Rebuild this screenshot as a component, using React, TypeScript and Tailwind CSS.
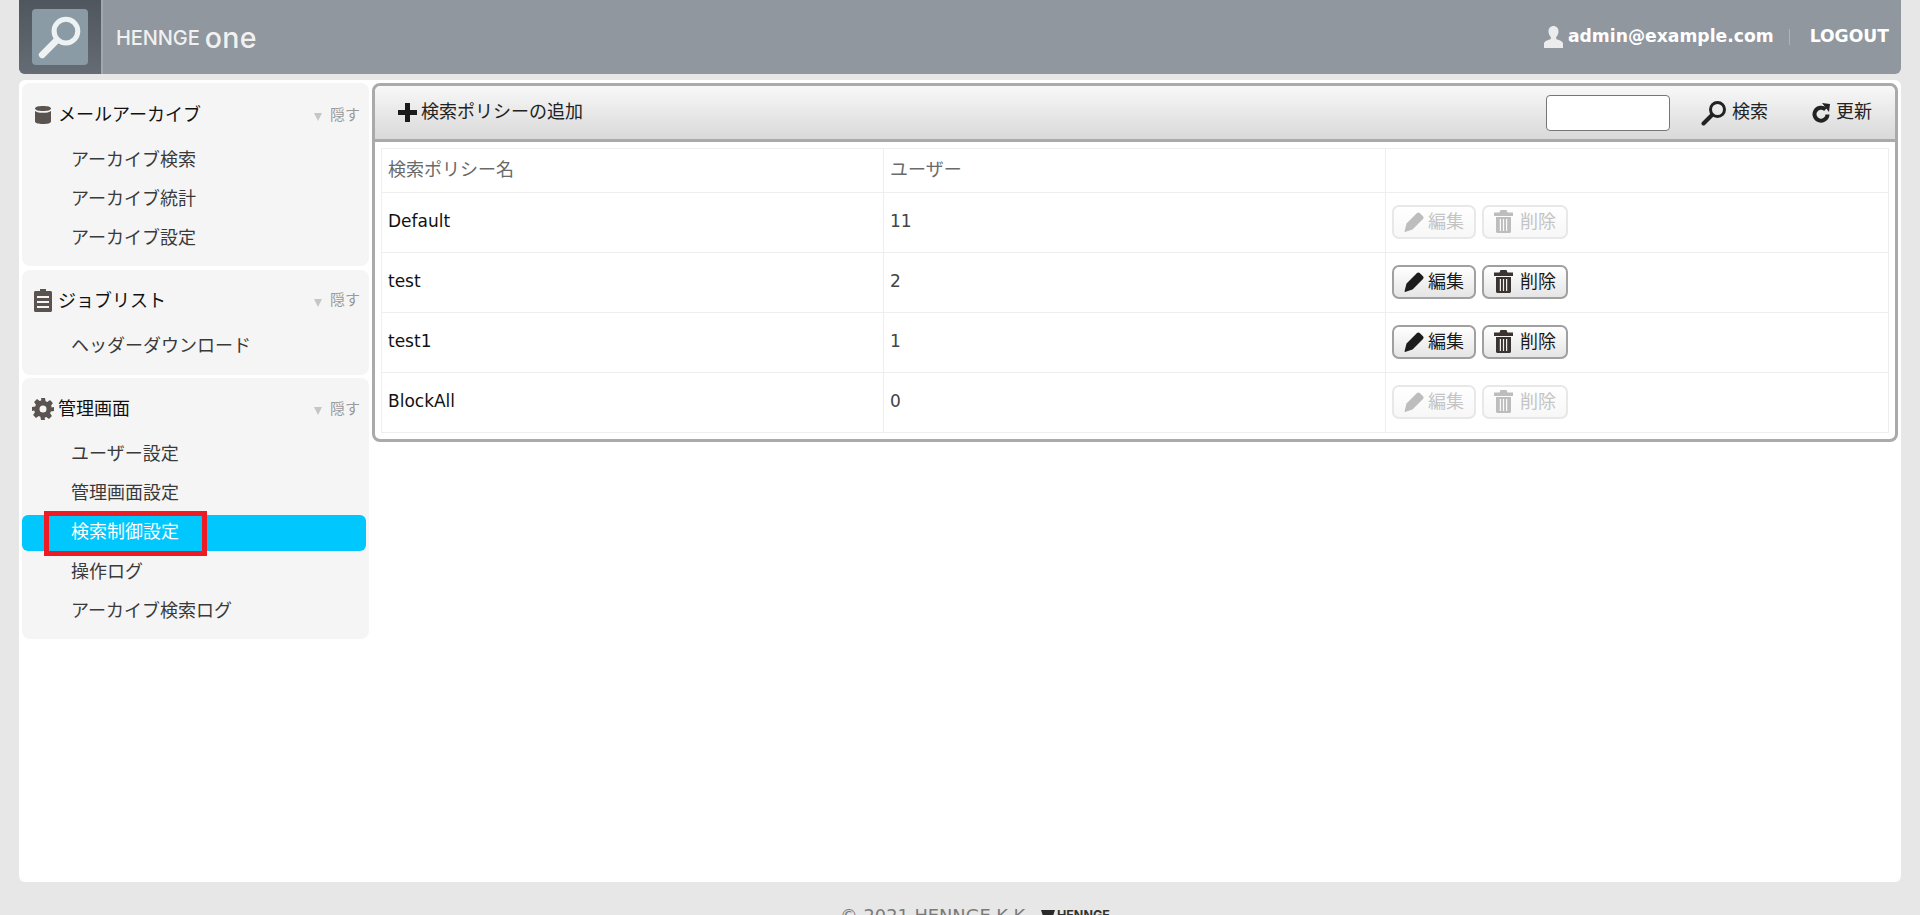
import type { ReactNode } from 'react';

const FONT = "font-['DejaVu_Sans','Noto_Sans_CJK_JP',sans-serif]";

function DatabaseIcon() {
  return (
    <svg width="18" height="20" viewBox="0 0 18 20" fill="#5a5350">
      <path d="M1 3.500C1 1.800 4.600 1 9 1s8 .8 8 2.500S13.400 6 9 6 1 5.200 1 3.500Z" />
      <path d="M1 6c1.500 1.300 4.600 1.800 8 1.800S15.500 7.300 17 6v10.500C17 18.200 13.400 19 9 19s-8-.8-8-2.500V6Z" />
    </svg>
  );
}

function ClipboardIcon() {
  return (
    <svg width="18" height="25" viewBox="0 0 18 25" fill="#5a5350">
      <path d="M6 3V1h6v2h4.500c.8 0 1.500.7 1.500 1.500v18c0 .8-.7 1.500-1.500 1.500h-15C.7 24 0 23.300 0 22.500v-18C0 3.700.7 3 1.500 3H6Zm-3 5v2h12V8H3Zm0 5v2h12v-2H3Zm0 5v2h12v-2H3Z" fillRule="evenodd" />
    </svg>
  );
}

function GearIcon() {
  return (
    <svg width="22" height="22" viewBox="0 0 22 22" fill="#5a5350">
      <path
        fillRule="evenodd"
        d="M9 0h4l.6 3.200 1.700.7L18 2.100 20.900 5l-1.800 2.700.7 1.700L22 9v4l-3.200.6-.7 1.700 1.800 2.700-2.900 2.900-2.700-1.800-1.700.7L13 22H9l-.6-3.200-1.700-.7L4 19.900 1.100 17l1.800-2.700-.7-1.700L0 13V9l3.200-.6.7-1.700L2.100 4 5 1.100l2.700 1.800 1.700-.7L9 0Zm2 7.500a3.500 3.500 0 1 0 0 7 3.500 3.500 0 0 0 0-7Z"
      />
    </svg>
  );
}

function SearchIcon({ size, color }: { size: number; color: string }) {
  return (
    <svg width={size} height={size} viewBox="0 0 26 26" fill="none" stroke={color}>
      <circle cx="16.500" cy="9.500" r="7" strokeWidth="3" />
      <path d="M11 15 2.500 23.500" strokeWidth="4" strokeLinecap="round" />
    </svg>
  );
}

function RefreshIcon() {
  return (
    <svg width="20" height="21" viewBox="0 0 20 21" fill="none">
      <path d="M14.500 7.500A6.500 6.500 0 1 0 16.500 12.500" stroke="#222" strokeWidth="4" />
      <path d="M11 1 19 2 18 10Z" fill="#222" />
    </svg>
  );
}

function PencilIcon({ color }: { color: string }) {
  return (
    <svg width="20" height="20" viewBox="0 0 20 20" fill={color}>
      <path d="M13 1c.8-.8 1.900-.8 2.700 0l3.300 3.300c.8.8.8 1.900 0 2.700L8.500 17.500 1 20l-.5-.5L2.500 11.500 13 1Z" />
    </svg>
  );
}

function TrashIcon({ color }: { color: string }) {
  return (
    <svg width="19" height="23" viewBox="0 0 19 23" fill={color}>
      <path
        fillRule="evenodd"
        d="M6.500 0h6l1 2.500H19V6H0V2.500h5.500L6.500 0ZM2 7h15v14.500c0 .8-.7 1.500-1.500 1.500h-12C2.700 23 2 22.300 2 21.500V7Zm3.800 2v12h1.200V9H5.800Zm3.100 0v12h1.200V9H8.900Zm3.100 0v12h1.200V9H12Z"
      />
    </svg>
  );
}

function UserIcon() {
  return (
    <svg width="19" height="22" viewBox="0 0 19 22" fill="#ececec">
      <path d="M9.500 0c3 0 5 2.300 5 5.500 0 2.200-1 4.300-2.300 5.500v2c2.500 1 6.800 2.200 6.800 4.500V22H0v-4.500C0 15.200 4.300 14 6.800 13v-2C5.500 9.800 4.500 7.700 4.500 5.500 4.500 2.300 6.500 0 9.500 0Z" />
    </svg>
  );
}

function PlusIcon() {
  return (
    <svg width="19" height="19" viewBox="0 0 19 19" fill="#1b1b1b">
      <path d="M7 0h5v7h7v5h-7v7H7v-7H0V7h7V0Z" />
    </svg>
  );
}

function NavGroup({ icon, title, items, className }: { icon: ReactNode; title: string; items: string[]; className: string }) {
  return (
    <div className={`rounded-lg bg-[#f5f5f5] ${className}`}>
      <div className="flex h-[62px] items-center pl-[8px] pr-[9px]">
        <span className="flex w-[26px] justify-center">{icon}</span>
        <span className="ml-[2px] flex-1 text-[18px] leading-none text-[#111]">{title}</span>
        <span className="mr-[8px] mt-[4px] h-0 w-0 border-x-[4.500px] border-t-[8px] border-x-transparent border-t-[#c6c6c6]" />
        <span className="text-[15px] leading-none text-[#9a9a9a]">隠す</span>
      </div>
      <ul className="-mt-[4px] flex flex-col gap-[3.200px]">
        {items.map((item) => {
          const active = item === '検索制御設定';
          return (
            <li
              key={item}
              className={`relative flex h-9 items-center rounded-md pl-[49px] text-[18px] leading-none ${
                active ? 'top-[1px] w-[344px] bg-[#00c8ff] pb-[2px] text-white' : 'text-[#3a3a3a]'
              }`}
            >
              {item}
              {active && <span className="absolute -top-[4px] left-[22px] h-[45px] w-[163px] border-[5px] border-[#ed1c24]" />}
            </li>
          );
        })}
      </ul>
    </div>
  );
}

function ActionButton({ label, icon, disabled, className }: { label: string; icon: ReactNode; disabled?: boolean; className: string }) {
  return (
    <button
      type="button"
      className={`flex h-[34px] items-center rounded-[7px] border-2 bg-gradient-to-b text-[18px] leading-none ${
        disabled ? 'border-[#e8e8e8] from-white to-[#f7f7f7] text-[#c4c4c4]' : 'border-[#a0a0a0] from-white to-[#e5e5e5] text-[#1a1a1a]'
      } ${className}`}
    >
      {icon}
      {label}
    </button>
  );
}

const policies = [
  { name: 'Default', users: 11, disabled: true },
  { name: 'test', users: 2, disabled: false },
  { name: 'test1', users: 1, disabled: false },
  { name: 'BlockAll', users: 0, disabled: true },
];

export default function App() {
  return (
    <div className={`h-[915px] overflow-hidden bg-[#e7e7e7] ${FONT}`}>
      <div className="mx-[19px]">
        <header className="flex h-[74px] items-stretch overflow-hidden rounded-b-md bg-[#90979e]">
          <div className="flex w-[82px] items-center justify-center bg-gradient-to-b from-[#50565d] to-[#666c73]">
            <div className="flex h-14 w-14 items-center justify-center rounded bg-[#8b9ba5]">
              <SearchIcon size={44} color="#eef2f3" />
            </div>
          </div>
          <div className="w-[2px] bg-[#a0a7ad]" />
          <div className="ml-[13px] flex items-center pt-[2px] font-['Inter',sans-serif] text-[20px] font-medium tracking-[-0.1px] text-[#f1f1f1]">
            HENNGE <span className="ml-[5px] text-[28.500px] leading-none tracking-[0.4px]">one</span>
          </div>
          <div className="ml-auto flex items-center pr-[12px] text-[17.200px] font-bold text-white">
            <UserIcon />
            <span className="ml-[5px]">admin@example.com</span>
            <span className="ml-[15px] mr-[20px] h-[16px] w-[1px] bg-[#adb2b7]" />
            <span>LOGOUT</span>
          </div>
        </header>

        <main className="mt-[6px] flex h-[802px] gap-[3px] rounded-md bg-white p-[3px]">
          <aside className="flex w-[347px] flex-col gap-[3.500px]">
            <NavGroup icon={<DatabaseIcon />} title="メールアーカイブ" items={['アーカイブ検索', 'アーカイブ統計', 'アーカイブ設定']} className="h-[183px] pt-[1px]" />
            <NavGroup icon={<ClipboardIcon />} title="ジョブリスト" items={['ヘッダーダウンロード']} className="h-[105px]" />
            <NavGroup
              icon={<GearIcon />}
              title="管理画面"
              items={['ユーザー設定', '管理画面設定', '検索制御設定', '操作ログ', 'アーカイブ検索ログ']}
              className="h-[261px]"
            />
          </aside>

          <section className="h-[359px] flex-1 rounded-lg border-[3px] border-[#aaaaaa]">
            <div className="flex h-[56px] items-center rounded-t-md border-b-[3px] border-[#aaaaaa] bg-gradient-to-b from-[#f8f8f8] to-[#d9d9d9] pl-[23px] pr-[23px] text-[18px] leading-none text-[#222]">
              <PlusIcon />
              <span className="ml-[4px] mb-[2px]">検索ポリシーの追加</span>
              <input className="ml-auto h-9 w-[124px] rounded-sm border border-[#767676] bg-white" />
              <span className="ml-[31px]"><SearchIcon size={26} color="#222" /></span>
              <span className="ml-[5px] mb-[2px]">検索</span>
              <span className="ml-[43px]"><RefreshIcon /></span>
              <span className="ml-[5px] mb-[2px]">更新</span>
            </div>
            <div className="p-[6px]">
              <table className="w-full table-fixed border-collapse text-[17px] text-[#111]">
                <thead>
                  <tr className="h-[44px] text-left text-[18px] font-normal text-[#6a6a6a]">
                    <th className="w-[502px] border border-[#eeeeee] px-[6px] pb-[2px] font-normal">検索ポリシー名</th>
                    <th className="w-[502px] border border-[#eeeeee] px-[6px] pb-[2px] font-normal">ユーザー</th>
                    <th className="border border-[#eeeeee] px-[6px] font-normal" />
                  </tr>
                </thead>
                <tbody>
                  {policies.map((policy) => (
                    <tr key={policy.name} className="h-[60px]">
                      <td className="border border-[#eeeeee] px-[6px] pb-[2px]">{policy.name}</td>
                      <td className="border border-[#eeeeee] px-[6px] pb-[2px] text-[#444]">{policy.users}</td>
                      <td className="border border-[#eeeeee] px-[6px] pb-[2px]">
                        <div className="flex gap-[6px]">
                          <ActionButton
                            label="編集"
                            disabled={policy.disabled}
                            className="w-[84px] pl-[10px]"
                            icon={<span className="mr-[4px]"><PencilIcon color={policy.disabled ? '#bdbdbd' : '#1c1c1c'} /></span>}
                          />
                          <ActionButton
                            label="削除"
                            disabled={policy.disabled}
                            className="w-[86px] pl-[10px]"
                            icon={<span className="mr-[7px]"><TrashIcon color={policy.disabled ? '#bdbdbd' : '#3a3330'} /></span>}
                          />
                        </div>
                      </td>
                    </tr>
                  ))}
                </tbody>
              </table>
            </div>
          </section>
        </main>

        <footer className="mt-[22px] flex items-center justify-center pl-[30px] text-[17.800px] leading-6 text-[#7a7a7a]">
          <span>© 2021 HENNGE K.K.</span>
          <span className="ml-[10px] flex items-center font-['Inter',sans-serif] text-[12.500px] font-bold text-[#333]">
            <svg width="14" height="12" viewBox="0 0 14 12" fill="#2a2a2a" className="mr-[2px]">
              <path d="M0 0h14l-2 6 2 6H0l2-6L0 0Z" />
            </svg>
            HENNGE
          </span>
        </footer>
      </div>
    </div>
  );
}
